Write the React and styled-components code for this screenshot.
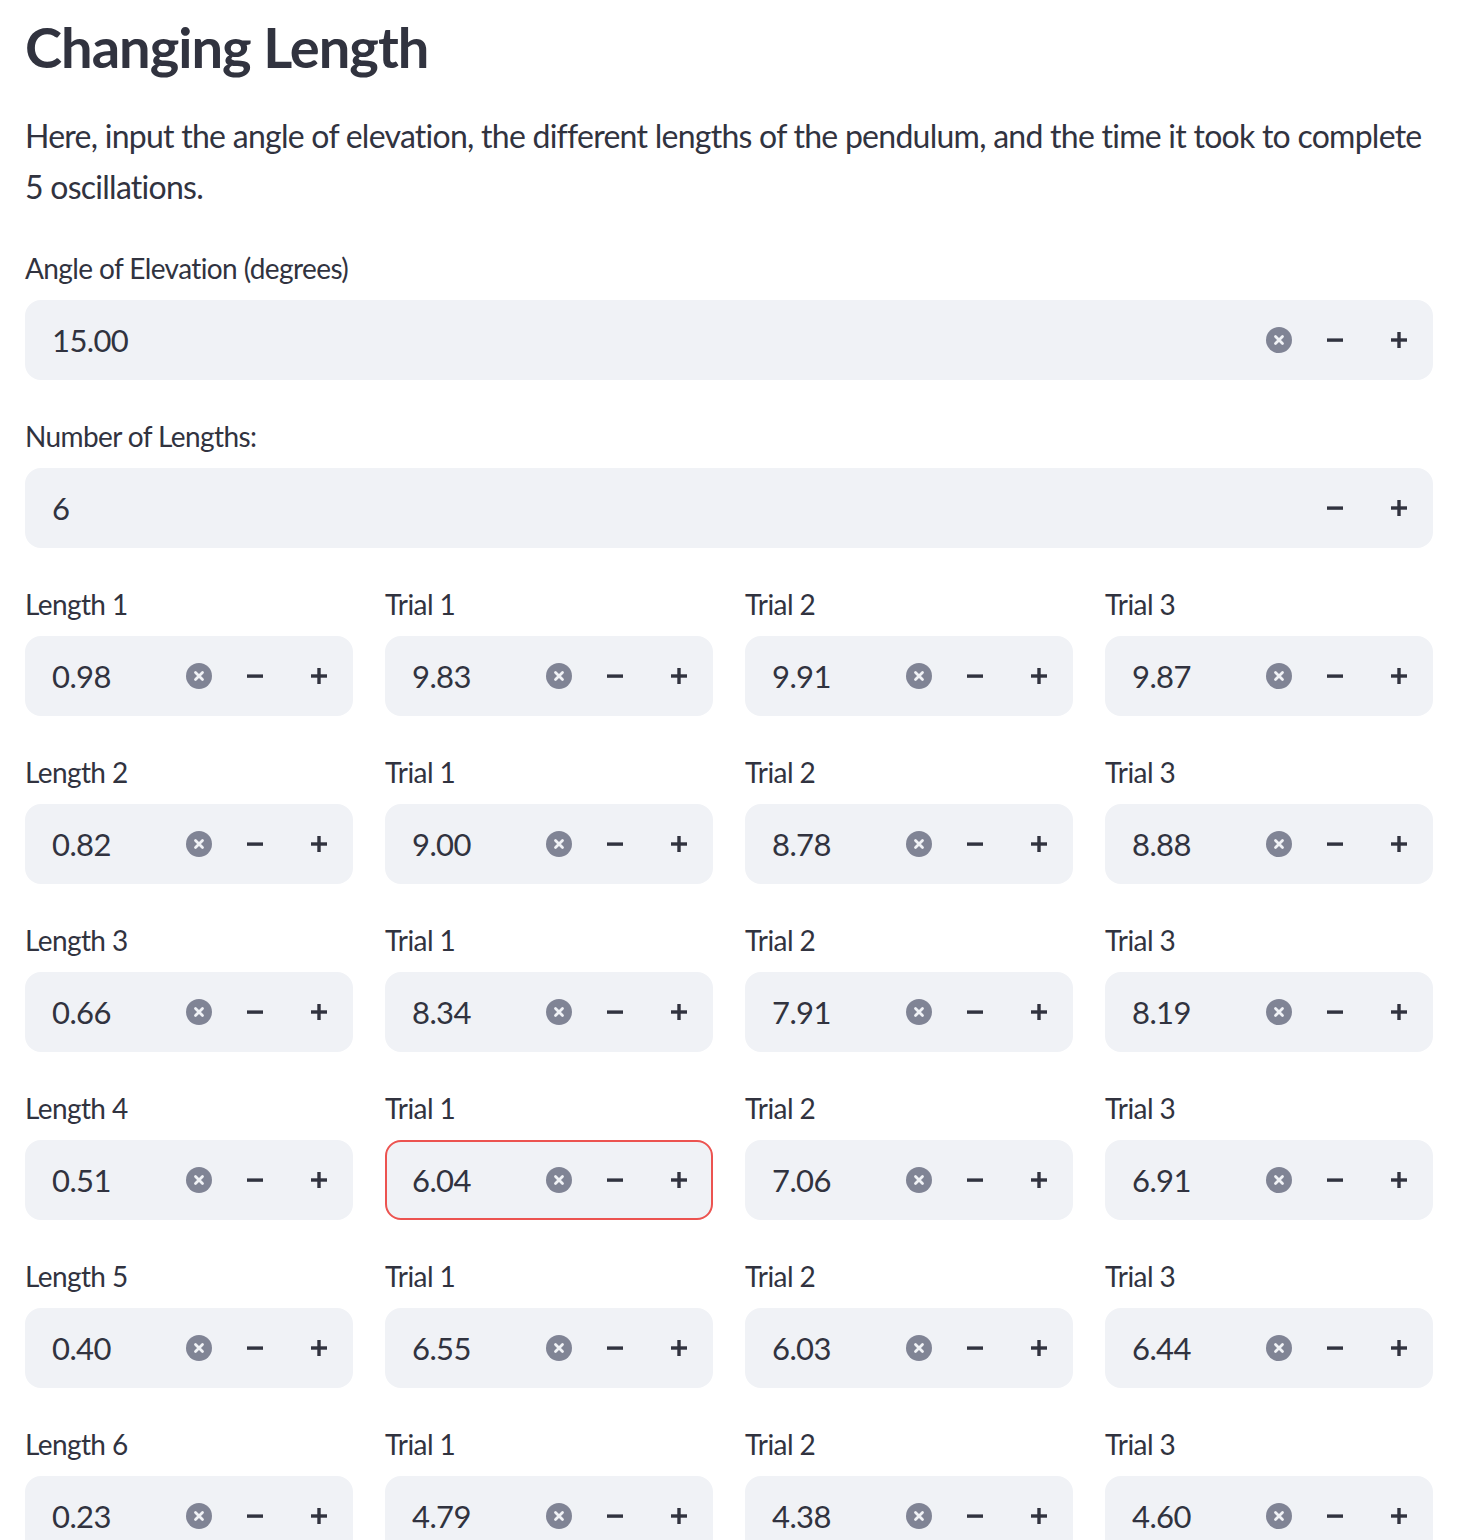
import React from 'react';
import styled, { createGlobalStyle } from 'styled-components';

const GlobalStyle = createGlobalStyle`
  body {
    margin: 0;
    background: #ffffff;
    font-family: Lato, "Noto Sans", sans-serif;
    color: #31333f;
  }
`;

const Page = styled.div`
  width: 1408px;
  padding: 0 25px;
  display: flex;
  flex-direction: column;
`;

const Title = styled.h2`
  margin: 0;
  padding-top: 12px;
  height: 98px;
  font-size: 56px;
  line-height: 70px;
  font-weight: 700;
  letter-spacing: -1px;
  color: #31333f;
`;

const Intro = styled.p`
  margin: 0 0 32px;
  font-size: 32px;
  line-height: 51px;
  letter-spacing: -0.74px;
  color: #31333f;
`;

const Field = styled.div`
  display: flex;
  flex-direction: column;
  margin-bottom: 32px;
`;

const Label = styled.label`
  height: 48px;
  margin-bottom: 8px;
  display: flex;
  align-items: center;
  font-size: 28px;
  letter-spacing: -0.6px;
  color: #31333f;
`;

const Box = styled.div`
  height: 80px;
  box-sizing: border-box;
  display: flex;
  align-items: center;
  background: #f0f2f6;
  border: 2px solid ${p => (p.$error ? '#ec5350' : '#f0f2f6')};
  border-radius: 16px;
  padding-left: 25px;
`;

const Value = styled.span`
  flex: 1;
  font-size: 31px;
  letter-spacing: -0.6px;
  color: #31333f;
`;

const Clear = styled.span`
  width: 26px;
  height: 26px;
  border-radius: 50%;
  background: #808495;
  display: flex;
  align-items: center;
  justify-content: center;
  margin-right: 11px;
`;

const Step = styled.span`
  width: 64px;
  height: 76px;
  display: flex;
  align-items: center;
  justify-content: center;
`;

const Grid = styled.div`
  display: grid;
  grid-template-columns: repeat(4, 1fr);
  column-gap: 32px;
`;

const ClearIcon = () => (
  <Clear>
    <svg width="12" height="12" viewBox="0 0 12 12">
      <path d="M2.5 2.5 L9.5 9.5 M9.5 2.5 L2.5 9.5" stroke="#f0f2f6" strokeWidth="2.8" strokeLinecap="round" />
    </svg>
  </Clear>
);

const Minus = () => (
  <Step>
    <svg width="18" height="18" viewBox="0 0 18 18">
      <rect x="1" y="7.4" width="16" height="3.4" fill="#31333f" />
    </svg>
  </Step>
);

const Plus = () => (
  <Step>
    <svg width="18" height="18" viewBox="0 0 18 18">
      <rect x="1" y="7.3" width="16" height="3.4" fill="#31333f" />
      <rect x="7.3" y="1" width="3.4" height="16" fill="#31333f" />
    </svg>
  </Step>
);

function NumberInput({ label, value, clearable = true, error }) {
  return (
    <Field>
      <Label>{label}</Label>
      <Box $error={error}>
        <Value>{value}</Value>
        {clearable && <ClearIcon />}
        <Minus />
        <Plus />
      </Box>
    </Field>
  );
}

const rows = [
  ['0.98', '9.83', '9.91', '9.87'],
  ['0.82', '9.00', '8.78', '8.88'],
  ['0.66', '8.34', '7.91', '8.19'],
  ['0.51', '6.04', '7.06', '6.91'],
  ['0.40', '6.55', '6.03', '6.44'],
  ['0.23', '4.79', '4.38', '4.60'],
];

export default function App() {
  return (
    <>
      <GlobalStyle />
      <Page>
        <Title>Changing Length</Title>
        <Intro>
          Here, input the angle of elevation, the different lengths of the pendulum, and the time it took to complete 5 oscillations.
        </Intro>
        <NumberInput label="Angle of Elevation (degrees)" value="15.00" />
        <NumberInput label="Number of Lengths:" value="6" clearable={false} />
        <Grid>
          {rows.map((r, i) => (
            <React.Fragment key={i}>
              <NumberInput label={`Length ${i + 1}`} value={r[0]} />
              <NumberInput label="Trial 1" value={r[1]} error={i === 3} />
              <NumberInput label="Trial 2" value={r[2]} />
              <NumberInput label="Trial 3" value={r[3]} />
            </React.Fragment>
          ))}
        </Grid>
      </Page>
    </>
  );
}
